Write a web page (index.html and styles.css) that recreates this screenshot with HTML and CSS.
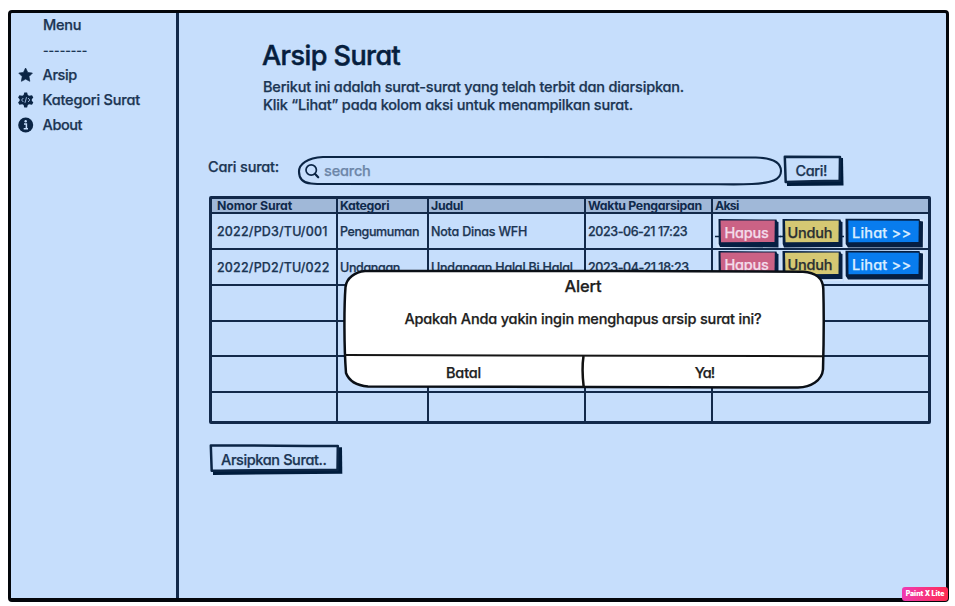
FILE: index.html
```
<!DOCTYPE html>
<html lang="id">
<head>
<meta charset="utf-8">
<title>Arsip Surat</title>
<link rel="stylesheet" href="styles.css">
</head>
<body>
<div class="frame">
  <nav class="sidebar">
    <div class="item menu">Menu</div>
    <div class="item dashes">--------</div>
    <div class="item tight"><svg class="ico" viewBox="0 0 16 16"><path d="M7.600 1l2.200 4.500 4.600.6-3.400 3.500.8 4.700-4.200-2.200-4.200 2.200.8-4.700L.8 6.100l4.600-.6z" fill="#0b2545" stroke="#0b2545" stroke-width=".7" stroke-linejoin="round"/></svg>Arsip</div>
    <div class="item"><svg class="ico" viewBox="0 0 16 16"><path d="M6.300 .5h2.800l.7 2.500 1.300.8 2.900-.5 1.300 2.300-1.500 1.700v1.400l1.500 1.700-1.300 2.300-2.900-.5-1.300.8-.7 2.500H6.300L5.600 13l-1.300-.8-2.900.5L.1 10.400l1.500-1.700V7.300L.1 5.600l1.300-2.300 2.900.5L5.600 3z" fill="#0b2545"/><path d="M5.300 6L3.600 8l1.700 2M10.100 6l1.700 2-1.700 2M8.500 5.200L7 10.800" fill="none" stroke="#a9c4e8" stroke-width=".9"/></svg>Kategori Surat</div>
    <div class="item tight"><svg class="ico" viewBox="0 0 16 16"><circle cx="7.700" cy="8" r="7.500" fill="#0b2545"/><path d="M6 7h2.400v4.500M5.700 11.700H10" fill="none" stroke="#c6defc" stroke-width="1.500"/><circle cx="7.700" cy="4.300" r="1.200" fill="#c6defc"/></svg>About</div>
  </nav>
  <main class="main">
    <header class="intro">
      <h1>Arsip Surat</h1>
      <p>Berikut ini adalah surat-surat yang telah terbit dan diarsipkan.<br><span class="second">Klik “Lihat” pada kolom aksi untuk menampilkan surat.</span></p>
    </header>
    <div class="searchrow">
      <label>Cari surat:</label>
      <div class="search">
        <svg class="art" viewBox="0 0 486 32"><path d="M26 2C10 3 2 9 2 16.500 2 25 7 28 14 28.500c7 .7 13 .5 21 .5l387 .2c10 .2 22 .3 33-.2 19-1 29-4 29-13C484 7 474 2.900 459 2.500 340 2 150 2 26 2z" fill="none" stroke="#0b2545" stroke-width="2.100"/><circle cx="14.200" cy="15" r="5.200" fill="none" stroke="#0b2545" stroke-width="1.700"/><path d="M17.900 18.800l3.300 3.500" stroke="#0b2545" stroke-width="2.200" stroke-linecap="round"/></svg>
        <span>search</span>
      </div>
      <div class="btn cari"><svg class="art" viewBox="0 0 61 32"><path d="M3 4L60 3l.5 27.500L4 31z" fill="#001c3c"/><path d="M1.800 1.700L57 2l-.3 23.800-27 .4L2.700 27z" fill="#c6defc" stroke="#0b2545" stroke-width="2.500" stroke-linejoin="round"/></svg><span>Cari!</span></div>
    </div>
    <section class="table">
      <div class="row head"><div>Nomor Surat</div><div class="h2">Kategori</div><div class="h2">Judul</div><div class="h2">Waktu Pengarsipan</div><div class="h3">Aksi</div></div>
      <div class="row r1"><div class="code">2022/PD3/TU/001</div><div class="peng">Pengumuman</div><div class="nota">Nota Dinas WFH</div><div class="date">2023-06-21 17:23</div>
        <div class="actions">
          <div class="btn hapus"><svg class="art" viewBox="0 0 61 30"><path d="M-1.500 1h62v29h-62z" fill="#d2e4fb"/><path d="M-3 18.500h68" stroke="#0b2545" stroke-width="1.500"/><path d="M.5 1l58 .5.500 2 1.500.5v25.500L2 29 .7 26z" fill="#061f42"/><path d="M2.500 2.500h54.300L56.500 24l-53.500.3z" fill="#cb6285"/></svg><span>Hapus</span></div>
          <div class="btn unduh"><svg class="art" viewBox="0 0 61 30"><path d="M-1 1h61.500v29H-1z" fill="#d2e4fb"/><path d="M-2 18.500h66" stroke="#0b2545" stroke-width="1.500"/><path d="M.5 1l58 .5.500 2 1.500.5v25L2 29.500.7 26z" fill="#061f42"/><path d="M3 2.800l53.700-.3L56.500 24l-53 .3z" fill="#d5c873"/></svg><span>Unduh</span></div>
          <div class="btn lihat"><svg class="art" viewBox="0 0 79 30"><path d="M-1 1h80v29H-1z" fill="#d2e4fb"/><path d="M.5 .7L74.500 1l.5 2 3 .5-.2 26L3 29.500.7 26z" fill="#061f42"/><path d="M3.300 2.500l70.500.3L73.500 24l-70 .3z" fill="#087cee"/></svg><span>Lihat &gt;&gt;</span></div>
        </div></div>
      <div class="row r2"><div class="code">2022/PD2/TU/022</div><div class="unda">Undangan</div><div class="nota">Undangan Halal Bi Halal</div><div class="date">2023-04-21 18:23</div>
        <div class="actions">
          <div class="btn hapus"><svg class="art" viewBox="0 0 61 30"><path d="M-1.500 1h62v29h-62z" fill="#d2e4fb"/><path d="M.5 1l58 .5.500 2 1.500.5v25.500L2 29 .7 26z" fill="#061f42"/><path d="M2.500 2.500h54.300L56.500 24l-53.500.3z" fill="#cb6285"/></svg><span>Hapus</span></div>
          <div class="btn unduh"><svg class="art" viewBox="0 0 61 30"><path d="M-1 1h61.500v30H-1z" fill="#d2e4fb"/><path d="M.5 1l58 .5.500 2 1.500.5v25L2 29.500.7 26z" fill="#061f42"/><path d="M3 2.800l53.700-.3L56.500 24l-53 .3z" fill="#d5c873"/></svg><span>Unduh</span></div>
          <div class="btn lihat"><svg class="art" viewBox="0 0 79 30"><path d="M-1 1h80.500v30.500H-1z" fill="#d2e4fb"/><path d="M.5 .7L74.500 1l.5 2 3 .5-.2 26L3 29.500.7 26z" fill="#061f42"/><path d="M3.300 2.500l70.500.3L73.500 24l-70 .3z" fill="#087cee"/></svg><span>Lihat &gt;&gt;</span></div>
        </div></div>
      <div class="row"><div></div><div></div><div></div><div></div><div></div></div>
      <div class="row"><div></div><div></div><div></div><div></div><div></div></div>
      <div class="row"><div></div><div></div><div></div><div></div><div></div></div>
      <div class="row"><div></div><div></div><div></div><div></div><div></div></div>
    </section>
    <div class="btn add"><svg class="art" viewBox="0 0 134 32"><path d="M4 4.500l129-1.300.3 26.600L4 31z" fill="#001c3c"/><path d="M1.800 1.500c40-.4 80 .5 127 .4L128.500 26c-40-.3-80 .3-125.800.8z" fill="#c6defc" stroke="#0b2545" stroke-width="2.500" stroke-linejoin="round"/></svg><span>Arsipkan Surat..</span></div>
  </main>
</div>
<div class="alert">
  <svg class="art" viewBox="0 0 482 120"><path d="M22 2C12 3 3.500 9 2.500 18 1 38 1 78 3 104c3 8 11 12.500 22 13.500l430 1c13-.5 24-7 25-18 .8-28 1-56 .3-81C480 9 472 3.500 460 2.700 320 1.500 150 2.500 22 2z" fill="#fff" stroke="#0a0f16" stroke-width="2.500"/><path d="M2 86l478 1.200" fill="none" stroke="#151515" stroke-width="2"/><path d="M240.500 87c-1.500 10-1 21 .2 31" fill="none" stroke="#111" stroke-width="2.500"/></svg>
  <div class="title">Alert</div>
  <div class="msg">Apakah Anda yakin ingin menghapus arsip surat ini?</div>
  <div class="choices"><div>Batal</div><div class="ya">Ya!</div></div>
</div>
<div class="mark">Paint X Lite</div>
</body>
</html>
```
FILE: styles.css
```
* { box-sizing: border-box; }
body {
  margin: 0;
  height: 606px;
  padding: 10px 6px 4px 8px;
  overflow: hidden;
  position: relative;
  background: #fff;
  color: #1b3553;
  font: 500 14.5px Inter, "Liberation Sans", sans-serif;
  font-feature-settings: "cv11";
  letter-spacing: -.18px;
  white-space: nowrap;
  -webkit-text-stroke: .25px;
}
.frame {
  display: flex;
  height: 592px;
  border: 3px solid #03060b;
  border-bottom-width: 4px;
  border-radius: 4px;
  background: #c6defc;
}
.sidebar {
  width: 168px;
  flex: none;
  border-right: 3px solid #12294a;
}
.item {
  display: flex;
  align-items: center;
  height: 24.8px;
  padding-left: 6.500px;
}
.item.menu, .item.dashes { padding-left: 32px; }
.item.menu { letter-spacing: -.2px; padding-bottom: 1px; }
.item.dashes { font-size: 12px; letter-spacing: 0; -webkit-text-stroke: .2px; }
.tight { letter-spacing: -.4px; }
.ico { width: 16px; height: 16px; margin-right: 9px; }
.main { flex: 1; padding-left: 30px; }
.intro { padding: 28px 0 0 54px; height: 142px; }
h1 {
  margin: 0 0 0 -1px;
  font-size: 27px;
  line-height: 30px;
  font-weight: 500;
  letter-spacing: -.55px;
  color: #061e3e;
  -webkit-text-stroke: .5px;
}
p { margin: 7px 0 0; line-height: 18px; letter-spacing: -.18px; }
.second { letter-spacing: -.19px; }
.searchrow { display: flex; height: 41px; }
.searchrow label { width: 89px; margin-left: -1px; padding-top: 3px; }
.search { position: relative; width: 486px; height: 32px; padding: 7px 0 0 27px; color: #6d86a8; }
.art { position: absolute; left: 0; top: 0; width: 100%; height: 100%; overflow: visible; }
.btn { position: relative; }
.btn span { position: relative; }
.cari { width: 61px; height: 32px; padding: 7px 0 0 12.5px; letter-spacing: -.4px; }
.table {
  width: 722px;
  height: 228px;
  border: 3px solid #12294a;
  border-radius: 2px;
  display: flex;
  flex-direction: column;
  font-size: 12.5px;
}
.row {
  display: grid;
  grid-template-columns: 126px 91px 157px 127px 215px;
  height: 35.5px;
}
.row > div {
  display: flex;
  align-items: center;
  border-right: 2px solid #12294a;
  border-bottom: 2px solid #12294a;
  padding-left: 2px;
}
.row > div:first-child { padding-left: 5px; }
.row > div:last-child { border-right: 0; }
.row:last-child { flex: 1; height: auto; }
.row:last-child > div { border-bottom: 0; }
.head { height: 15px; font-weight: 700; font-size: 12.3px; background: #a0b8d8; color: #102a4c; letter-spacing: -.1px; -webkit-text-stroke: 0; }
.row.head > div { padding-top: 1px; line-height: 12px; }
.h2 { letter-spacing: -.3px; }
.h3 { letter-spacing: -.75px; }
.r1, .r2 { height: 36px; }
.code { letter-spacing: .17px; }
.peng { letter-spacing: -.4px; }
.nota { letter-spacing: -.2px; }
.row .date { letter-spacing: -.42px; }
.unda { letter-spacing: -.35px; }
.row > .actions { align-items: flex-start; padding: 4px 0 0 5px; gap: 2.500px; }
.r2 > .actions { padding-top: 0; }
.actions .btn { height: 30px; flex: none; line-height: 18px; padding-top: 6px; font-size: 14.5px; letter-spacing: -.25px; }
.actions .hapus { width: 61px; padding-left: 6.500px; color: #f3dbea; }
.actions .unduh { width: 61px; padding-left: 6px; color: #2b3032; }
.actions .lihat { width: 79px; padding-left: 7px; color: #d9edff; letter-spacing: .2px; }
.add { width: 134px; height: 32px; margin-top: 20px; padding: 7px 0 0 12px; letter-spacing: -.39px; }
.alert {
  position: absolute;
  left: 343px;
  top: 269px;
  width: 482px;
  height: 120px;
  color: #202020;
  text-align: center;
}
.alert > div { position: relative; }
.title { font-size: 16.500px; line-height: 20px; padding: 7px 2px 0 0; letter-spacing: -.2px; }
.msg { line-height: 20px; padding: 13px 2px 0 0; letter-spacing: -.17px; }
.choices { display: flex; padding-top: 35px; line-height: 18px; }
.choices div { width: 241px; }
.choices .ya { letter-spacing: -.9px; }
.mark {
  position: absolute;
  left: 902px;
  top: 587px;
  width: 46px;
  height: 14px;
  border-radius: 3px;
  background: linear-gradient(100deg, #ee3bb4, #ff2b4e);
  color: #fff;
  font: 900 6.900px/14px Inter, sans-serif;
  letter-spacing: 0;
  text-align: center;
  -webkit-text-stroke: 0;
}
```
